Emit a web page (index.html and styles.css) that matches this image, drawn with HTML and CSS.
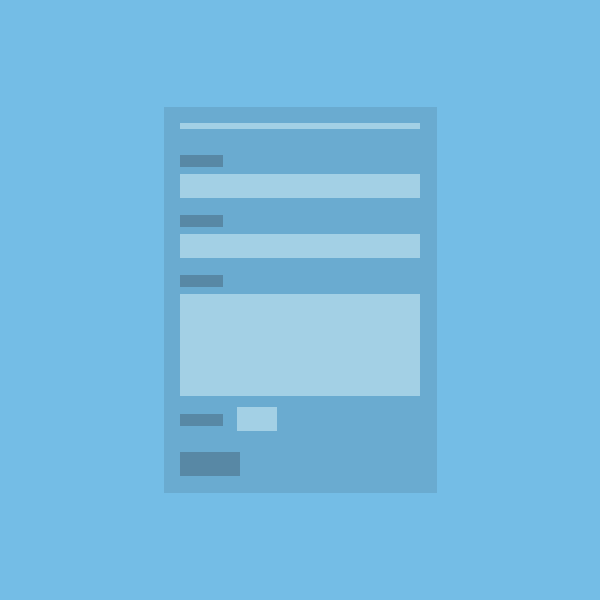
FILE: index.html
```html
<!DOCTYPE html>
<html>
<head>
<meta charset="utf-8">
<link rel="stylesheet" href="styles.css">
</head>
<body>
<div class="stage">
  <form class="card">
    <div class="title"></div>
    <div class="field">
      <div class="label"></div>
      <div class="input"></div>
    </div>
    <div class="field">
      <div class="label"></div>
      <div class="input"></div>
    </div>
    <div class="field last">
      <div class="label"></div>
      <div class="input textarea"></div>
    </div>
    <div class="inline-row">
      <div class="label row-label"></div>
      <div class="input small"></div>
    </div>
    <div class="button"></div>
  </form>
</div>
</body>
</html>
```
FILE: styles.css
```css
html, body {
  margin: 0;
  padding: 0;
  background: #74bde6;
}
.stage {
  width: 600px;
  height: 600px;
  display: flex;
  align-items: center;
  justify-content: center;
}
.card {
  box-sizing: border-box;
  width: 273px;
  height: 386px;
  margin: 0;
  padding: 16px 17px 17px 16px;
  background: #6aabd0;
  display: flex;
  flex-direction: column;
}
.title {
  height: 6px;
  background: #a3d0e5;
  margin-bottom: 26px;
}
.field {
  display: flex;
  flex-direction: column;
  gap: 7px;
  margin-bottom: 17px;
}
.field.last {
  margin-bottom: 11px;
}
.label {
  width: 43px;
  height: 12px;
  background: #5888a5;
}
.input {
  height: 24px;
  background: #a3d0e5;
}
.textarea {
  height: 102px;
}
.inline-row {
  display: flex;
  align-items: flex-start;
  gap: 14px;
  margin-bottom: 21px;
}
.row-label {
  margin-top: 7px;
}
.small {
  width: 40px;
}
.button {
  width: 60px;
  height: 24px;
  background: #5888a5;
}
```
